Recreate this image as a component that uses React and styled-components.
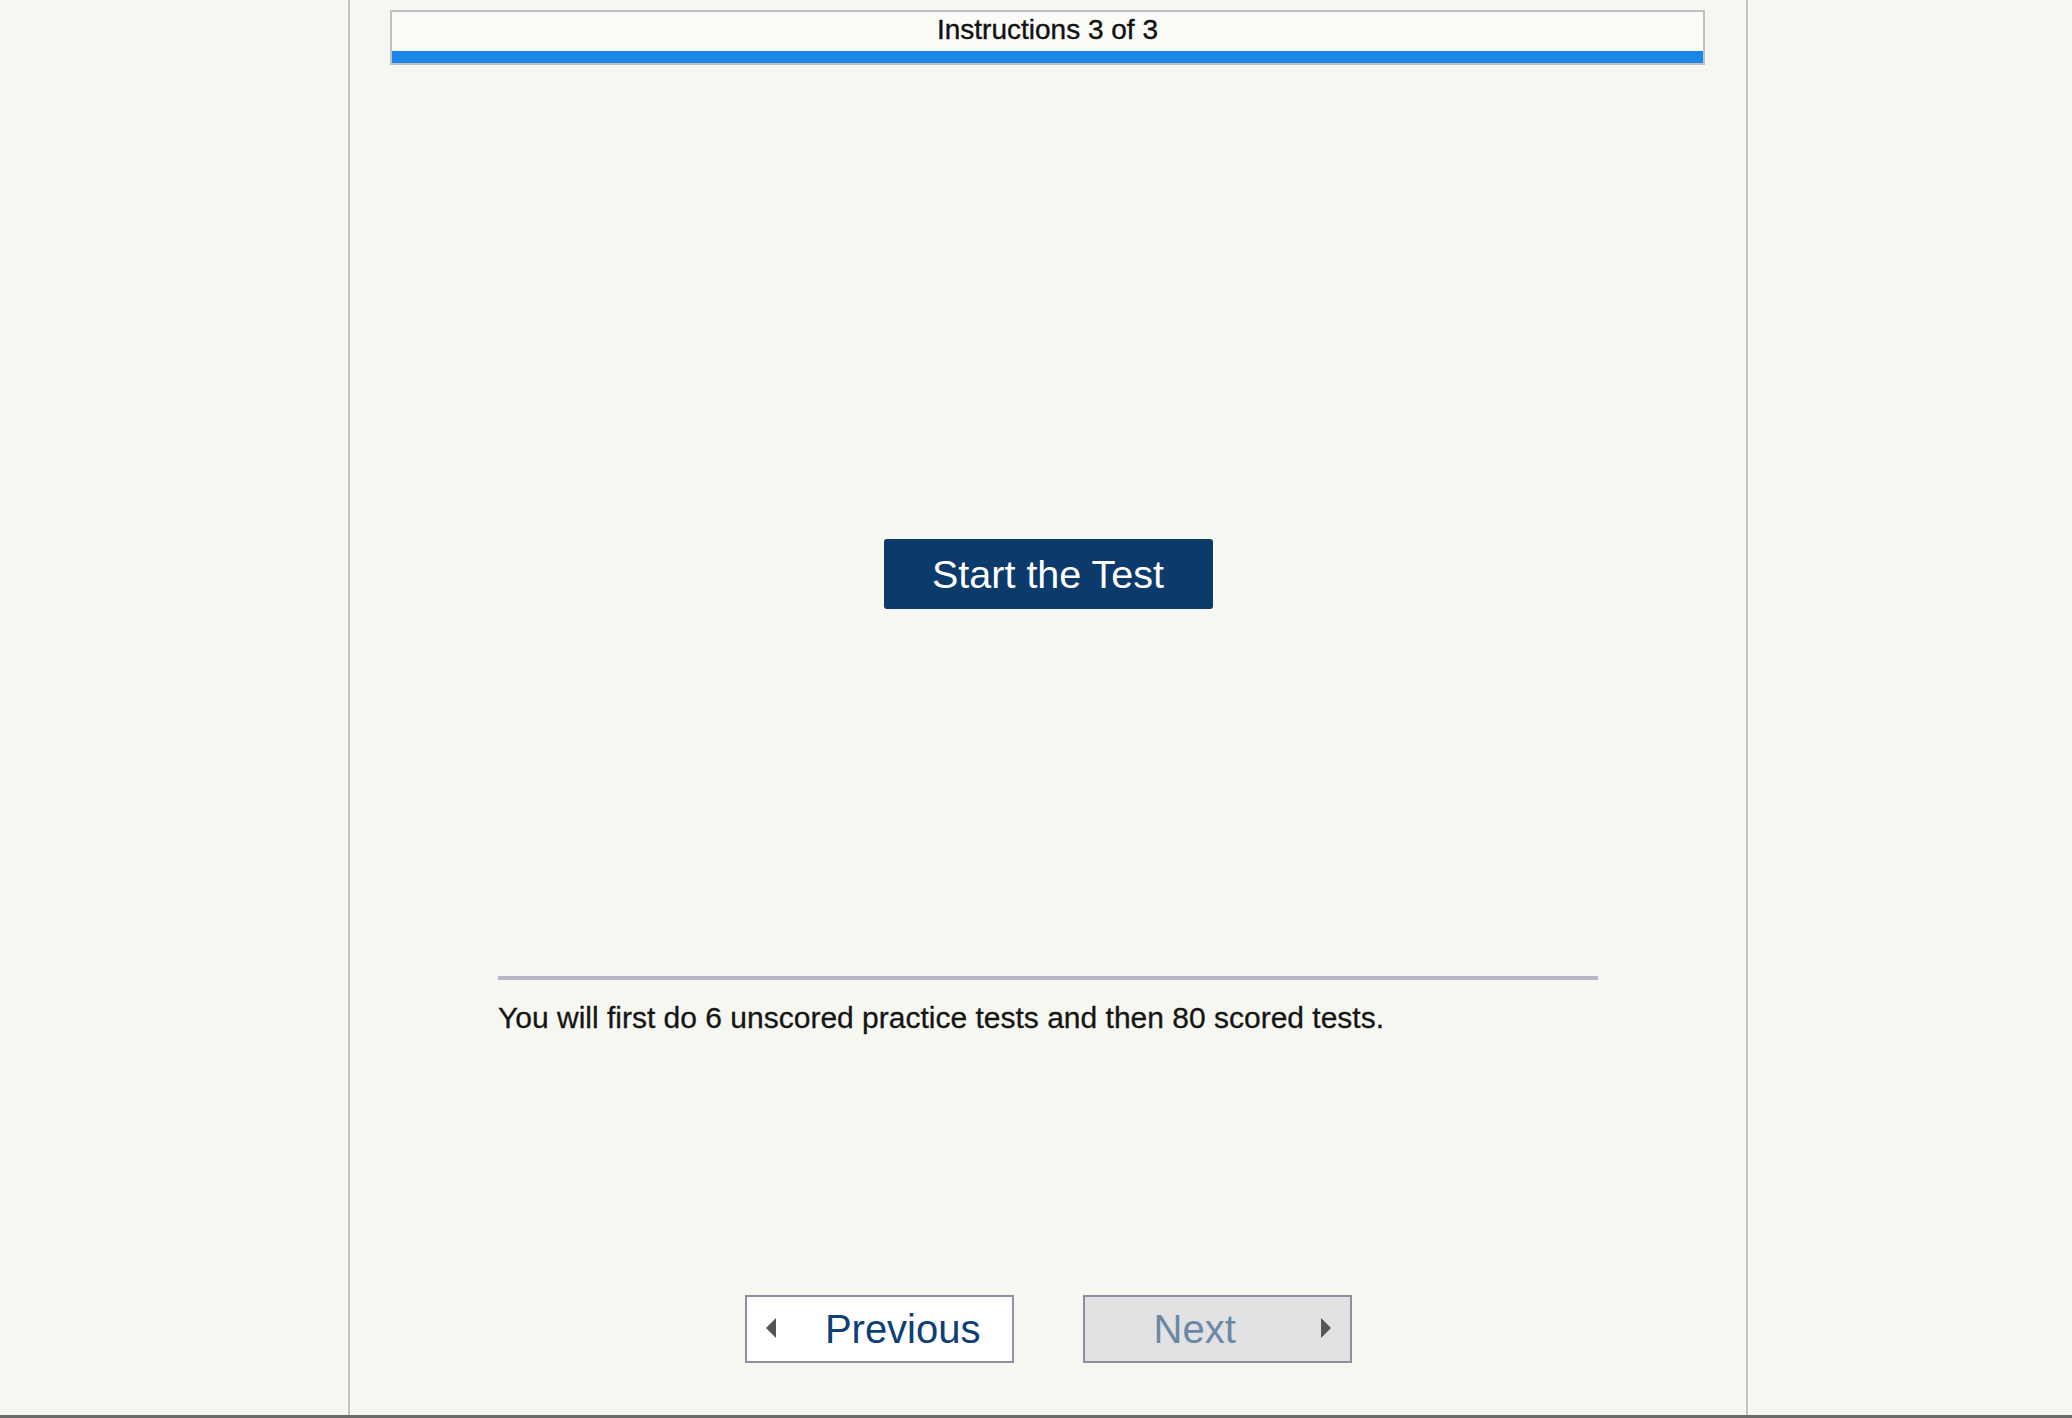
import React from "react";
import styled, { createGlobalStyle } from "styled-components";

const GlobalStyle = createGlobalStyle`
  html, body {
    margin: 0;
    padding: 0;
    background-color: #f7f7f2;
    font-family: "Liberation Sans", Arial, sans-serif;
  }
`;

const StyledPage = styled.div`
  height: 1415px;
  border-bottom: 3px solid #6a6a6a;
  overflow: hidden;
`;

const StyledColumn = styled.div`
  margin-left: 348px;
  width: 1396px;
  height: 100%;
  border-left: 2px solid #c2c2ca;
  border-right: 2px solid #c2c2ca;
  display: flex;
  flex-direction: column;
  align-items: center;
`;

const StyledProgress = styled.div`
  align-self: stretch;
  margin: 10px 41px 0 40px;
  border: 2px solid #c0c0c6;
  background-color: #fbfbf8;
  display: flex;
  flex-direction: column;
  align-items: center;
`;

const StyledProgressLabel = styled.div`
  font-size: 28px;
  line-height: 36px;
  height: 39px;
  color: #111;
  -webkit-text-stroke: 0.4px #111;
`;

const StyledProgressBar = styled.div`
  align-self: stretch;
  height: 12px;
  background-color: #1a86e8;
`;

const StyledStartButton = styled.button`
  margin-top: 474px;
  width: 329px;
  height: 70px;
  border: none;
  border-radius: 3px;
  background-color: #0b3a6b;
  color: #fff;
  font-family: "Liberation Sans", Arial, sans-serif;
  font-size: 39.5px;
  padding: 0;
  cursor: pointer;
`;

const StyledRule = styled.div`
  margin-top: 367px;
  width: 1100px;
  height: 4px;
  background-color: #b6b6c4;
`;

const StyledNote = styled.p`
  margin: 20px 0 0;
  width: 1100px;
  font-size: 30px;
  line-height: 36px;
  color: #151515;
  -webkit-text-stroke: 0.3px #151515;
`;

const StyledNav = styled.div`
  margin-top: 259px;
  display: flex;
  gap: 69px;
`;

const StyledNavButton = styled.button`
  position: relative;
  width: 269px;
  height: 68px;
  padding: 0;
  border: 2px solid ${(p) => (p.disabled ? "#8e8e9e" : "#9090a0")};
  background-color: ${(p) => (p.disabled ? "#e2e2e4" : "#ffffff")};
  color: ${(p) => (p.disabled ? "#6b88a6" : "#0f3f75")};
  font-family: "Liberation Sans", Arial, sans-serif;
  font-size: 40px;
  display: flex;
  align-items: center;
  justify-content: ${(p) => (p.$side === "left" ? "flex-end" : "flex-start")};
  padding-left: ${(p) => (p.$side === "right" ? "69px" : "0")};
  padding-right: ${(p) => (p.$side === "left" ? "31px" : "0")};
  box-sizing: border-box;
  cursor: pointer;
`;

const StyledArrow = styled.span`
  position: absolute;
  top: 21px;
  ${(p) => (p.$side === "left" ? "left: 19px;" : "right: 19px;")}
  width: 0;
  height: 0;
  border-top: 10px solid transparent;
  border-bottom: 10px solid transparent;
  ${(p) =>
    p.$side === "left"
      ? "border-right: 10px solid #555;"
      : "border-left: 10px solid #555;"}
`;

const App = () => {
  return (
    <StyledPage>
      <GlobalStyle />
      <StyledColumn>
        <StyledProgress>
          <StyledProgressLabel>Instructions 3 of 3</StyledProgressLabel>
          <StyledProgressBar />
        </StyledProgress>
        <StyledStartButton>Start the Test</StyledStartButton>
        <StyledRule />
        <StyledNote>
          You will first do 6 unscored practice tests and then 80 scored tests.
        </StyledNote>
        <StyledNav>
          <StyledNavButton $side="left">
            <StyledArrow $side="left" />
            Previous
          </StyledNavButton>
          <StyledNavButton $side="right" disabled>
            Next
            <StyledArrow $side="right" />
          </StyledNavButton>
        </StyledNav>
      </StyledColumn>
    </StyledPage>
  );
};

export default App;
